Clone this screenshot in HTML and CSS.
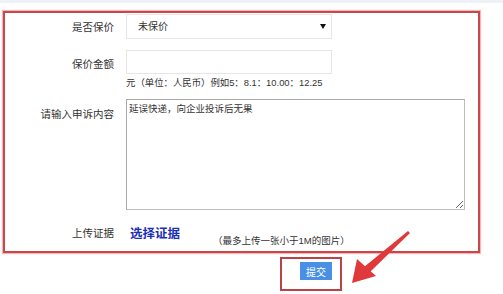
FILE: index.html
```html
<!DOCTYPE html>
<html lang="zh-CN">
<head>
<meta charset="utf-8">
<title>申诉</title>
<link rel="stylesheet" href="styles.css">
</head>
<body>
<div class="top-strip"></div>
<form class="form-box">
  <div class="row row-select">
    <label class="label">是否保价</label>
    <div class="select-wrap">
      <select class="select"><option>未保价</option></select>
    </div>
  </div>
  <div class="row row-input">
    <label class="label">保价金额</label>
    <div class="control">
      <input class="input" type="text">
      <div class="hint">元（单位：人民币）例如5：8.1：10.00：12.25</div>
    </div>
  </div>
  <div class="row row-text">
    <label class="label label-top">请输入申诉内容</label>
    <textarea class="textarea">延误快递，向企业投诉后无果</textarea>
  </div>
  <div class="row row-upload">
    <label class="label">上传证据</label>
    <a class="pick">选择证据</a>
    <span class="note">（最多上传一张小于1M的图片）</span>
  </div>
</form>
<div class="submit-frame">
  <button class="submit" type="button">提交</button>
</div>
<svg class="arrow" width="503" height="294" viewBox="0 0 503 294">
  <polygon points="408,231 410,233 370,272 364,267" fill="#e0393b"/>
  <polygon points="352,283 357,259 376,276" fill="#e0393b"/>
</svg>
</body>
</html>
```
FILE: styles.css
```css
html, body {
  margin: 0;
  padding: 0;
  background: #fff;
}
body {
  width: 503px;
  height: 294px;
  position: relative;
  overflow: hidden;
  font-family: "Liberation Sans", "Noto Sans CJK SC", sans-serif;
  color: #333;
}
.top-strip {
  height: 3px;
  background: #eef2f6;
}
.form-box {
  box-sizing: border-box;
  width: 477px;
  margin: 8px 0 0 3px;
  border: 2px solid #c9464a;
  box-shadow: 0 0 1px 1px #f0b8b8;
  padding: 0 0 8px 0;
}
.row {
  display: flex;
  align-items: center;
}
.label {
  box-sizing: border-box;
  width: 121px;
  flex: none;
  padding-right: 12px;
  text-align: right;
  font-size: 10.5px;
  color: #333;
}
.row-select {
  height: 26px;
}
.select-wrap {
  position: relative;
  width: 206px;
  height: 25px;
}
.select-wrap::after {
  content: "";
  position: absolute;
  right: 6px;
  top: 10px;
  border-left: 3px solid transparent;
  border-right: 3px solid transparent;
  border-top: 5px solid #111;
}
.select {
  -webkit-appearance: none;
  appearance: none;
  box-sizing: border-box;
  width: 206px;
  height: 25px;
  border: 1px solid #e6e6e6;
  border-radius: 0;
  background: #fff;
  padding: 0 0 0 11px;
  font-family: "Liberation Sans", "Noto Sans CJK SC", sans-serif;
  font-size: 10px;
  color: #333;
  outline: none;
}
.row-input {
  margin-top: 11px;
  align-items: flex-start;
}
.row-input .label {
  padding-top: 6px;
}
.control {
  display: flex;
  flex-direction: column;
}
.input {
  box-sizing: border-box;
  width: 206px;
  height: 24px;
  border: 1px solid #e6e6e6;
  margin: 0;
  padding: 0;
  outline: none;
}
.hint {
  margin-top: 3px;
  font-size: 9.4px;
  line-height: 12px;
  color: #333;
}
.row-text {
  margin-top: 10px;
  align-items: flex-start;
}
.label-top {
  padding-top: 7px;
}
.textarea {
  box-sizing: border-box;
  width: 339px;
  height: 111px;
  margin: 0;
  padding: 3px 2px;
  border: 1px solid #bdbdbd;
  border-top-color: #a9a9a9;
  border-left-color: #a9a9a9;
  font-family: "Liberation Sans", "Noto Sans CJK SC", sans-serif;
  font-size: 9.5px;
  line-height: 12px;
  color: #333;
  outline: none;
  resize: both;
}
.row-upload {
  margin-top: 11px;
  height: 22px;
}
.pick {
  margin-left: 4px;
  font-size: 12.5px;
  font-weight: bold;
  color: #1c2fb5;
  cursor: pointer;
}
.note {
  margin-left: 33px;
  margin-top: 16px;
  font-size: 9.5px;
  color: #333;
}
.submit-frame {
  box-sizing: border-box;
  width: 62px;
  height: 34px;
  margin: 4px 0 0 280px;
  border: 2px solid #b94447;
  padding: 3px 0 0 18px;
}
.submit {
  display: block;
  width: 32px;
  height: 18px;
  border: none;
  margin: 0;
  padding: 0;
  background: #4a8fe6;
  color: #fff;
  font-family: "Liberation Sans", "Noto Sans CJK SC", sans-serif;
  font-size: 10px;
}
.arrow {
  position: absolute;
  left: 0;
  top: 0;
  pointer-events: none;
}
```
